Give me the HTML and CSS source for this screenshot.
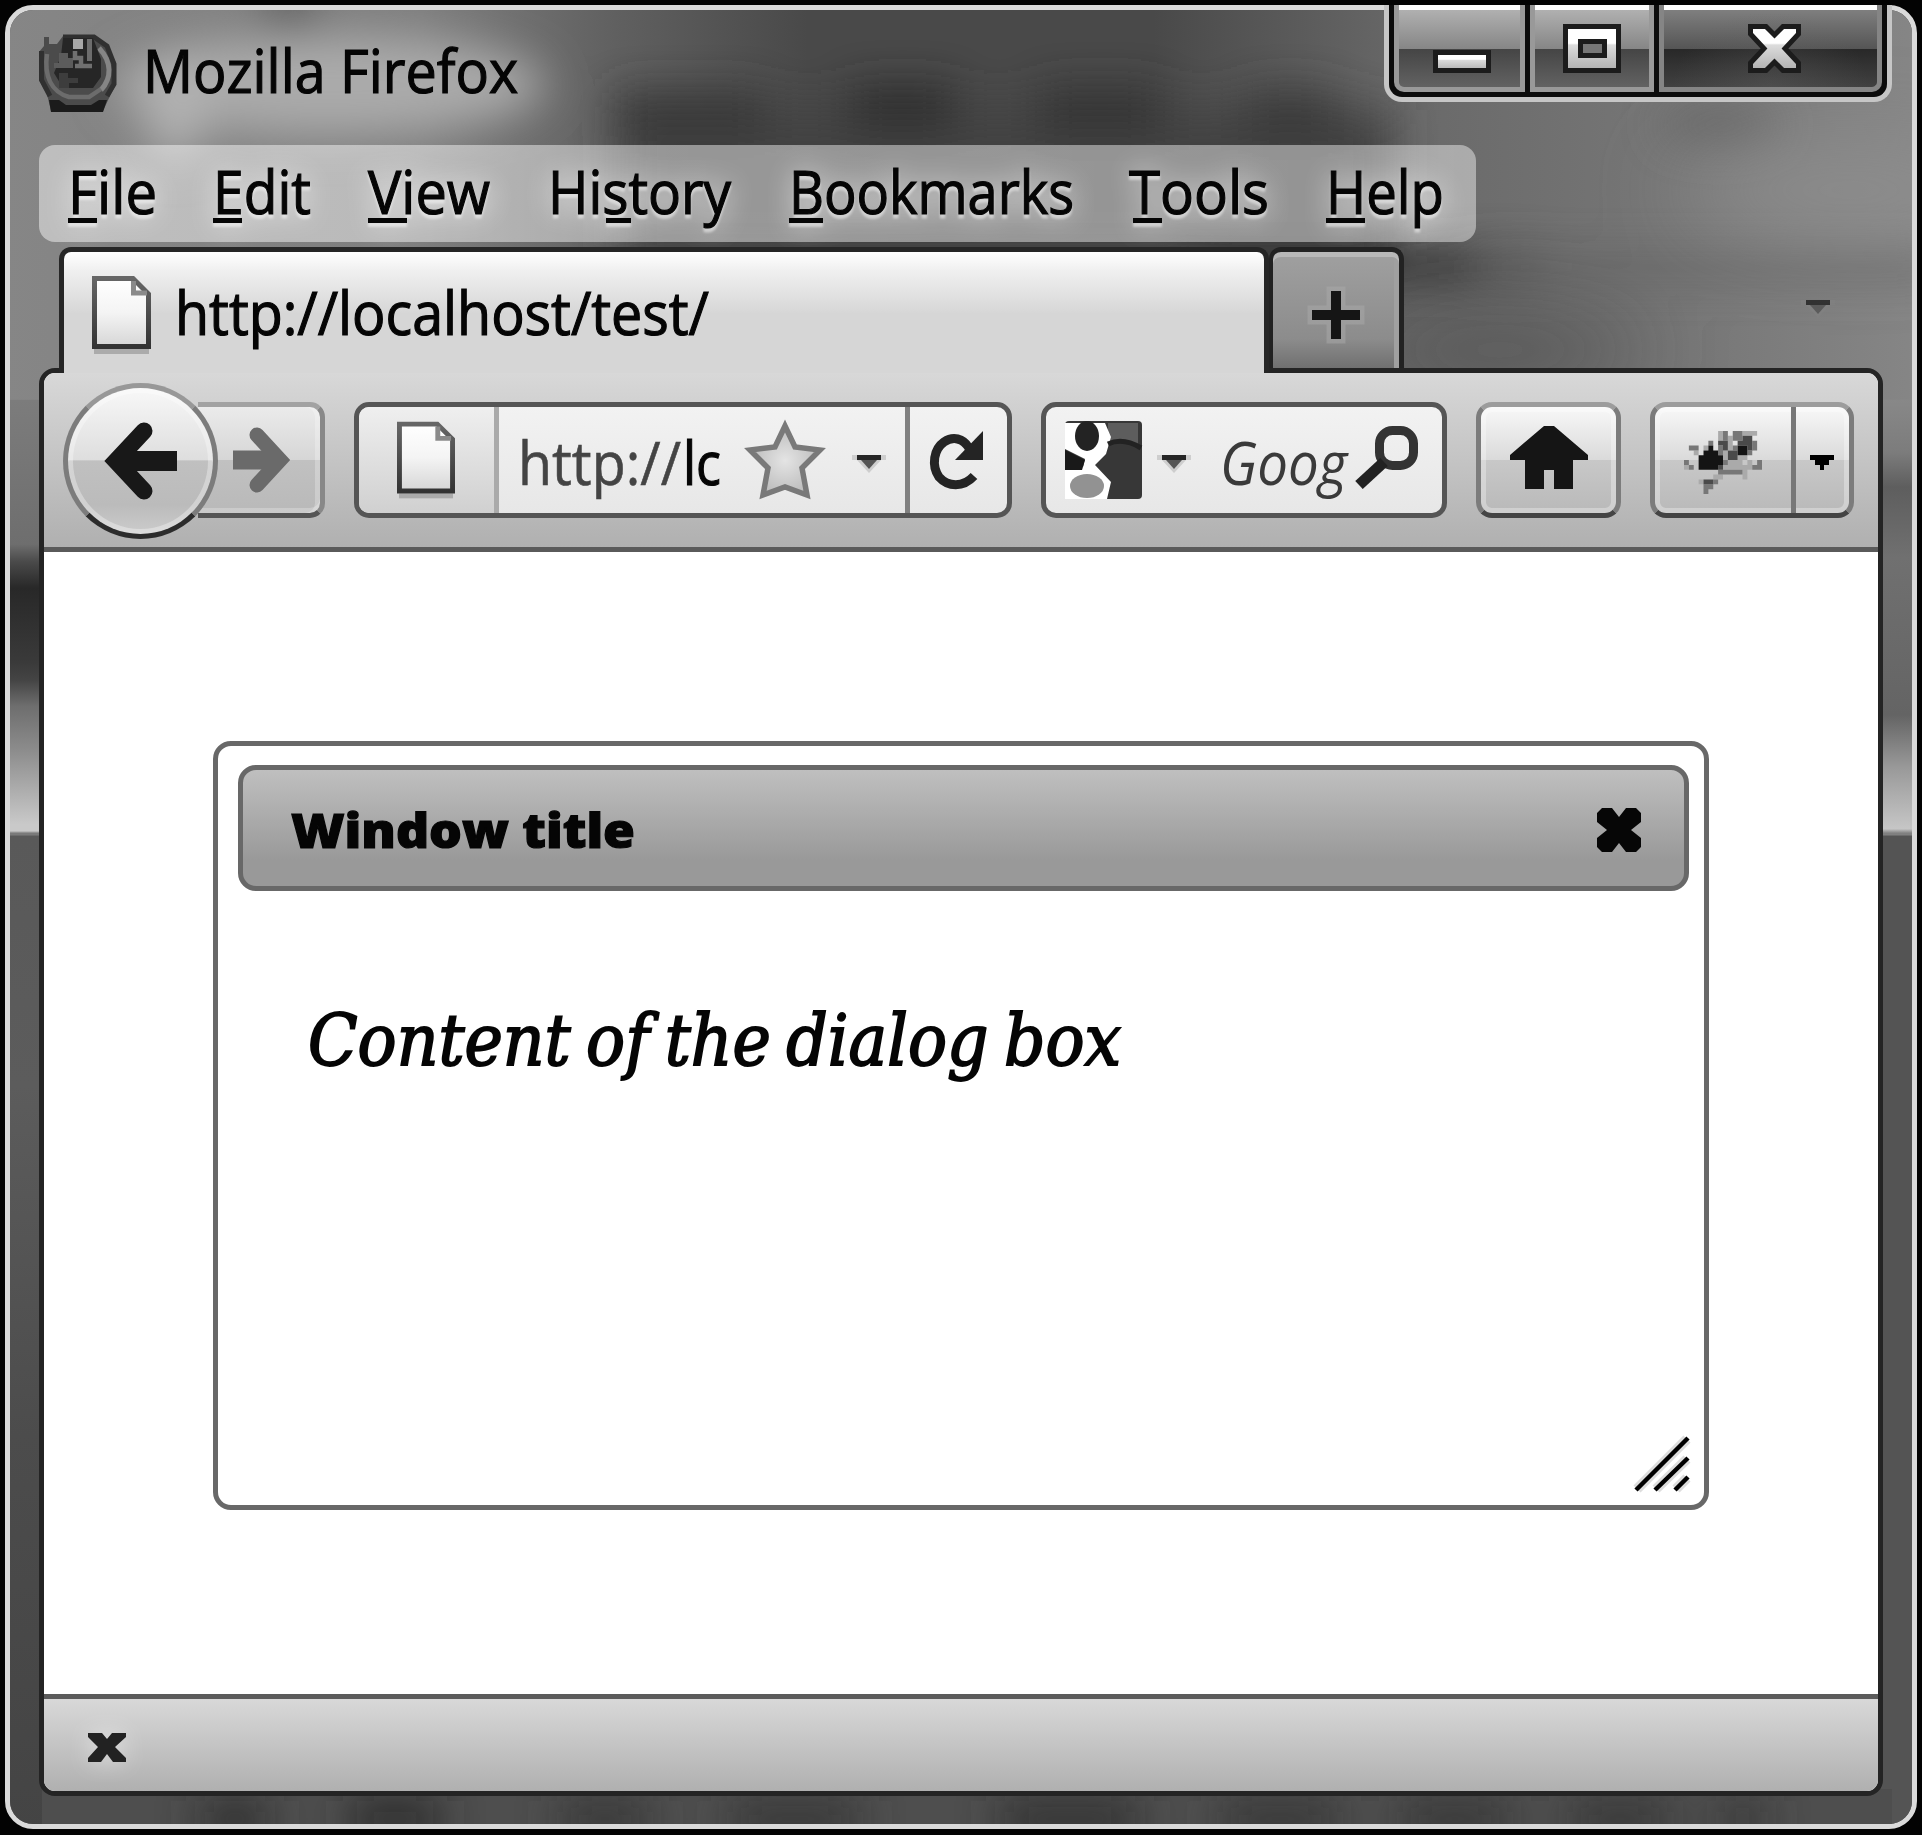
FILE: index.html
```html
<!DOCTYPE html>
<html lang="en">
<head>
<meta charset="utf-8">
<title>Mozilla Firefox</title>
<link rel="stylesheet" href="styles.css">
</head>
<body>
<svg width="0" height="0" class="defs">
  <defs>
    <linearGradient id="pageFill" x1="0" y1="0" x2="0" y2="1"><stop offset="0" stop-color="#fff"/><stop offset=".5" stop-color="#f4f4f4"/><stop offset="1" stop-color="#d6d6d6"/></linearGradient>
    <linearGradient id="pageEdge" x1="0" y1="0" x2="0" y2="1"><stop offset="0" stop-color="#666"/><stop offset="1" stop-color="#333"/></linearGradient>
    <linearGradient id="chromeFill" x1="0" y1="0" x2="0" y2="1"><stop offset=".38" stop-color="#fff"/><stop offset=".42" stop-color="#dcdcdc"/><stop offset="1" stop-color="#b0b0b0"/></linearGradient>
    <radialGradient id="starFill"><stop offset="0" stop-color="#e4e4e4"/><stop offset="1" stop-color="#bdbdbd"/></radialGradient>
    <symbol id="page" viewBox="0 0 59 78">
      <rect x="2" y="73" width="55" height="5" fill="#a0a0a0" opacity=".8"/>
      <path d="M2.500 2.500H41L56.500 18V70.500H2.500Z" fill="url(#pageFill)" stroke="url(#pageEdge)" stroke-width="5"/>
      <path d="M41.500 5V17H55" fill="none" stroke="#8a8a8a" stroke-width="5"/>
    </symbol>
    <symbol id="caret" viewBox="0 0 34 20">
      <path d="M0 2H34V7H29L17 20L5 7H0Z" fill="#888" opacity=".3"/>
      <path d="M5 2H29V7H5Z" fill="#262626"/>
      <path d="M9 7H25L17 16Z" fill="#555"/>
    </symbol>
  </defs>
</svg>
<div class="window">
  <svg class="glass" viewBox="10 10 1902 1815" preserveAspectRatio="none">
    <defs>
      <filter id="soft" x="-50%" y="-80%" width="200%" height="260%"><feGaussianBlur stdDeviation="22"/></filter>
      <filter id="softer" x="-50%" y="-80%" width="200%" height="260%"><feGaussianBlur stdDeviation="45"/></filter>
      <linearGradient id="top" x1="0" y1="0" x2="1" y2="0"><stop offset="0" stop-color="#868686"/><stop offset=".22" stop-color="#7e7e7e"/><stop offset=".32" stop-color="#606060"/><stop offset=".42" stop-color="#494949"/><stop offset=".6" stop-color="#494949"/><stop offset=".74" stop-color="#6a6a6a"/><stop offset=".88" stop-color="#777"/><stop offset="1" stop-color="#868686"/></linearGradient>
      <linearGradient id="railL" x1="0" y1="0" x2="0" y2="1"><stop offset="0" stop-color="#7c7c7c"/><stop offset=".33" stop-color="#6e6e6e"/><stop offset=".37" stop-color="#4a4a4a"/><stop offset=".43" stop-color="#282828"/><stop offset=".6" stop-color="#3a3a3a"/><stop offset=".64" stop-color="#444"/><stop offset=".7" stop-color="#6e6e6e"/><stop offset=".8" stop-color="#8c8c8c"/><stop offset=".97" stop-color="#c9c9c9"/><stop offset=".985" stop-color="#c9c9c9"/><stop offset=".99" stop-color="#7a7a7a"/><stop offset="1" stop-color="#7a7a7a"/></linearGradient>
      <linearGradient id="railR" x1="0" y1="0" x2="0" y2="1"><stop offset="0" stop-color="#888"/><stop offset=".12" stop-color="#7c7c7c"/><stop offset=".2" stop-color="#5e5e5e"/><stop offset=".36" stop-color="#707070"/><stop offset=".72" stop-color="#646464"/><stop offset=".84" stop-color="#999"/><stop offset=".98" stop-color="#c6c6c6"/><stop offset=".99" stop-color="#808080"/><stop offset="1" stop-color="#808080"/></linearGradient>
      <linearGradient id="low" x1="0" y1="0" x2="0" y2="1"><stop offset="0" stop-color="#595959"/><stop offset=".25" stop-color="#5c5c5c"/><stop offset=".6" stop-color="#4c4c4c"/><stop offset="1" stop-color="#444"/></linearGradient>
    </defs>
    <rect x="0" y="0" width="1922" height="440" fill="url(#top)"/>
    <rect x="0" y="400" width="60" height="438" fill="url(#railL)"/>
    <rect x="1870" y="400" width="60" height="438" fill="url(#railR)"/>
    <rect x="0" y="836" width="60" height="1000" fill="url(#low)"/>
    <rect x="1870" y="836" width="60" height="1000" fill="#545454"/>
    <rect x="42" y="1790" width="1850" height="45" fill="#4e4e4e"/>
    <g filter="url(#soft)">
      <rect x="620" y="110" width="770" height="150" fill="#424242"/>
      <ellipse cx="330" cy="85" rx="215" ry="50" fill="#aaa"/>
      <ellipse cx="175" cy="105" rx="30" ry="55" fill="#b2b2b2"/>
      <ellipse cx="290" cy="12" rx="32" ry="16" fill="#484848"/>
      <rect x="615" y="93" width="150" height="40" fill="#343434"/>
      <rect x="850" y="88" width="105" height="40" fill="#2c2c2c"/>
      <rect x="1040" y="90" width="120" height="42" fill="#303030"/>
      <rect x="1245" y="92" width="90" height="44" fill="#383838"/>
      <ellipse cx="1720" cy="125" rx="60" ry="18" fill="#636363"/>
      <rect x="1200" y="251" width="340" height="34" fill="#333"/>
      <rect x="1480" y="256" width="460" height="22" fill="#646464"/>
    </g>
    <g filter="url(#soft)" opacity=".8">
      <rect x="200" y="1800" width="70" height="40" fill="#2c2c2c"/>
      <rect x="350" y="1800" width="90" height="40" fill="#202020"/>
      <rect x="560" y="1800" width="90" height="40" fill="#303030"/>
      <rect x="730" y="1800" width="130" height="40" fill="#303030"/>
      <rect x="1000" y="1800" width="140" height="40" fill="#2a2a2a"/>
      <rect x="1220" y="1800" width="120" height="40" fill="#303030"/>
      <rect x="1400" y="1800" width="110" height="40" fill="#303030"/>
      <rect x="1570" y="1800" width="100" height="40" fill="#303030"/>
      <rect x="1720" y="1800" width="45" height="40" fill="#303030"/>
    </g>
    <g filter="url(#softer)">
      <ellipse cx="1850" cy="190" rx="170" ry="38" fill="#909090"/>
      <ellipse cx="1500" cy="350" rx="150" ry="30" fill="#505050"/>
    </g>
  </svg>

  <header class="titlebar">
    <svg class="app-icon" viewBox="0 0 78 78">
      <path d="M5 3H10V10H18L24 2H56L68 12L77 29V50L70 64L64 77H12L8 60L0 46V18L5 12Z" fill="#4b4b4b"/>
      <path d="M2.500 17V46L11 62M24 3H55L68 12L75 30V50L68 62" fill="none" stroke="#303030" stroke-width="5"/>
      <path d="M60 14C73 28 73 44 62 56" fill="none" stroke="#858585" stroke-width="5"/>
      <path d="M8 20C5 42 12 58 30 63H50L62 55" fill="none" stroke="#6c6c6c" stroke-width="4.500"/>
      <path d="M24 4H54L62 25V43L54 54H24L15 39L22 22Z" fill="#262626"/>
      <path d="M34 5H44V15H34Z" fill="#a8a8a8"/>
      <path d="M48 5H53V27H48Z" fill="#6d6d6d"/>
      <path d="M20 19H29V24H34V34H15V29H20Z" fill="#5c5c5c"/>
      <path d="M36 17V24H42V32H36M43 32H53" fill="none" stroke="#707070" stroke-width="4.500"/>
      <path d="M20 39H29V44H39V49H30V54H20Z" fill="#3d3d3d"/>
      <path d="M10 66H20L27 71H52L60 66H68L64 78H12Z" fill="#1b1b1b"/>
    </svg>
    <svg class="title-text" viewBox="0 0 372 70"><text x="-3" y="56.500" textLength="375" lengthAdjust="spacingAndGlyphs">Mozilla Firefox</text></svg>
    <div class="controls">
      <div class="control minimize"><svg viewBox="0 0 58 49"><rect x="2.500" y="28.500" width="53" height="18" fill="url(#chromeFill)" stroke="#1c1c1c" stroke-width="5"/></svg></div>
      <div class="control maximize"><svg viewBox="0 0 58 49"><rect x="2.500" y="2.500" width="53" height="44" fill="url(#chromeFill)" stroke="#1c1c1c" stroke-width="5"/><rect x="17.500" y="17.500" width="24" height="14" fill="#777" stroke="#1c1c1c" stroke-width="5"/></svg></div>
      <div class="control close"><svg viewBox="0 0 53 49"><path d="M2.500 2.500H18L26.500 11L35 2.500H50.500V10L37 24.500L50.500 39V46.500H35L26.500 38L18 46.500H2.500V39L16 24.500L2.500 10Z" fill="url(#chromeFill)" stroke="#1c1c1c" stroke-width="5"/></svg></div>
    </div>
  </header>

  <nav class="menubar">
    <svg class="menu-item file" viewBox="0 0 82 97"><text x="-5" y="68.500" textLength="89" lengthAdjust="spacingAndGlyphs">File</text><path d="M-5 75.500H24"/></svg>
    <svg class="menu-item edit" viewBox="0 0 93 97"><text x="-4" y="68.500" textLength="98" lengthAdjust="spacingAndGlyphs">Edit</text><path d="M-4 75.500H25"/></svg>
    <svg class="menu-item view" viewBox="0 0 121 97"><text x="0" y="68.500" textLength="122" lengthAdjust="spacingAndGlyphs">View</text><path d="M0 75.500H39"/></svg>
    <svg class="menu-item history" viewBox="0 0 179 97"><text x="-4" y="68.500" textLength="183" lengthAdjust="spacingAndGlyphs">History</text><path d="M54 75.500H79"/></svg>
    <svg class="menu-item bookmarks" viewBox="0 0 278 97"><text x="-5" y="68.500" textLength="285" lengthAdjust="spacingAndGlyphs">Bookmarks</text><path d="M-5 75.500H29"/></svg>
    <svg class="menu-item tools" viewBox="0 0 139 97"><text x="1" y="68.500" textLength="140" lengthAdjust="spacingAndGlyphs">Tools</text><path d="M5 75.500H34"/></svg>
    <svg class="menu-item help" viewBox="0 0 111 97"><text x="-5" y="68.500" textLength="118" lengthAdjust="spacingAndGlyphs">Help</text><path d="M-5 75.500H34"/></svg>
  </nav>

  <div class="tabstrip">
    <div class="tab">
      <svg class="tab-icon"><use href="#page"/></svg>
      <svg class="tab-text" viewBox="0 0 533 90"><text x="-3" y="62" textLength="534" lengthAdjust="spacingAndGlyphs">http://localhost/test/</text></svg>
    </div>
    <div class="new-tab"><svg viewBox="0 0 58 58"><path d="M24 5H34V24H53V34H34V53H24V34H5V24H24Z" stroke="#aaa" stroke-width="9" stroke-opacity=".5" paint-order="stroke" fill="#151515"/></svg></div>
    <svg class="tab-list"><use href="#caret"/></svg>
  </div>

  <div class="frame">
    <div class="toolbar">
      <div class="nav-buttons">
        <div class="back"><svg viewBox="0 0 73 78"><path d="M40 9L12 39L40 69" fill="none" stroke="#181818" stroke-width="17" stroke-linecap="round"/><path d="M14 39H73" stroke="#181818" stroke-width="20"/></svg></div>
        <div class="forward"><svg viewBox="0 0 58 68"><path d="M24 9L47 34L24 59" fill="none" stroke="#6a6a6a" stroke-width="15" stroke-linecap="round"/><path d="M0 34H44" stroke="#6a6a6a" stroke-width="19"/></svg></div>
      </div>
      <div class="field urlbar">
        <div class="identity"><svg><use href="#page"/></svg></div>
        <svg class="url-text" viewBox="0 0 200 90"><text class="dim" x="-3" y="62" textLength="163" lengthAdjust="spacingAndGlyphs">http://</text><text x="162" y="62" textLength="38" lengthAdjust="spacingAndGlyphs">lc</text></svg>
        <svg class="star" viewBox="0 0 78 78"><path d="M39 5L49 26L74 29L56 47L61 74L39 66L17 74L22 47L4 29L29 26Z" fill="url(#starFill)" stroke="#797979" stroke-width="5.500"/></svg>
        <svg class="caret"><use href="#caret"/></svg>
        <div class="reload"><svg viewBox="0 0 53 58"><path d="M44 45C33 57 18 56 9 46C1 34 4 18 14 11C23 5 33 7 39 17" fill="none" stroke="#242424" stroke-width="9"/><path d="M53 0V29H25Z" fill="#242424"/></svg></div>
      </div>
      <div class="field search">
        <svg class="engine" viewBox="0 0 77 78">
          <rect width="77" height="78" rx="4" fill="#373737"/><path d="M43 2H73V26Q58 17 43 24Z" fill="#5d5d5d"/><path d="M0 2H40L46 16L41 33L30 44L46 61L42 78H0V49L18 46L20 38L0 28Z" fill="#fff"/><path d="M0 29L20 39L17 49H0Z" fill="#191919"/><ellipse cx="22" cy="15" rx="12" ry="15" fill="#232323"/><ellipse cx="22" cy="65" rx="17" ry="12" fill="#929292"/><path d="M43 23Q58 16 76 27" stroke="#222" stroke-width="5" fill="none"/>
        </svg>
        <svg class="caret"><use href="#caret"/></svg>
        <svg class="search-text" viewBox="0 0 126 90"><text x="-2" y="62" textLength="127" lengthAdjust="spacingAndGlyphs">Goog</text></svg>
        <svg class="magnifier" viewBox="0 0 63 63"><rect x="24.500" y="4.500" width="34" height="35" rx="13" fill="none" stroke="#333" stroke-width="9"/><path d="M29 36L4 59" stroke="#222" stroke-width="11"/></svg>
      </div>
      <div class="button home"><svg viewBox="0 0 78 63"><path d="M34 0H44L78 29V34H63V63H44V44H34V63H15V34H0V29Z" fill="#151515"/></svg></div>
      <div class="button addon">
        <div class="addon-main"><svg viewBox="0 0 16 13" preserveAspectRatio="none">
          <g fill="#aaa"><path d="M7 0H8V2H7ZM12 0H15V1H12ZM9 1H10V4H9ZM2 4H3V5H2ZM4 3H5V4H4ZM8 4H9V6H8ZM11 5H13V6H11ZM9 6H12V7H9ZM8 7H11V8H8ZM13 6H14V7H13ZM0 7H1V8H0ZM6 9H8V10H6ZM3 10H4V11H3ZM11 7H14V8H11ZM12 8H13V10H12Z"/></g>
          <g fill="#777"><path d="M8 0H9V2H8ZM10 0H12V2H10ZM1 3H3V4H1ZM5 2H6V3H5ZM14 2H15V4H14ZM0 6H1V7H0ZM1 7H2V8H1ZM15 6H16V8H15ZM14 7H15V8H14ZM7 3H8V5H7ZM10 3H11V4H10ZM8 6H9V7H8ZM7 8H12V9H7ZM6 10H7V11H6ZM4 11H6V12H4ZM4 12H5V13H4ZM13 4H14V5H13Z"/></g>
          <g fill="#4a4a4a"><path d="M7 2H9V3H7ZM12 1H14V2H12ZM11 2H14V3H11ZM8 3H9V4H8ZM9 4H11V6H9ZM13 3H14V4H13ZM4 10H6V11H4ZM7 7H8V8H7Z"/></g>
          <g fill="#141414"><path d="M5 3H6V4H7V5H8V7H7V8H3V5H4V4H5ZM11 3H13V5H11Z"/></g>
        </svg></div>
        <div class="addon-menu"><svg viewBox="0 0 24 15"><path d="M0 0H24V5H19V10H14V15H10V10H5V5H0Z"/></svg></div>
      </div>
    </div>

    <main class="page">
      <section class="dialog">
        <div class="dialog-title">
          <svg class="dialog-name" viewBox="0 0 344 60"><text x="0" y="44.500" textLength="344" lengthAdjust="spacingAndGlyphs">Window title</text></svg>
          <svg class="dialog-close" viewBox="0 0 44 44"><path d="M5 0H15L22 9L29 0H39L44 5V14L34 22L44 30V39L39 44H29L22 35L15 44H5L0 39V30L10 22L0 14V5Z" fill="#060606"/></svg>
        </div>
        <div class="dialog-body">
          <svg class="dialog-text" viewBox="0 0 810 100"><text x="-2" y="71" textLength="813" lengthAdjust="spacingAndGlyphs">Content of the dialog box</text></svg>
        </div>
        <svg class="grip" viewBox="0 0 54 54"><g stroke="#ddd" stroke-width="10"><path d="M2 52L52 2M21 52L52 22M41 52L52 41"/></g><g stroke="#000" stroke-width="4.500"><path d="M1 53L53 1M20 53L53 21M40 53L53 40"/></g></svg>
      </section>
    </main>

    <footer class="status"><svg viewBox="0 0 38 29"><path d="M0 0H14L19 6L24 0H38V4L27 14L38 25V29H25L19 21L13 29H0V25L10 14L0 4Z" fill="#222"/></svg></footer>
  </div>
</div>
</body>
</html>
```
FILE: styles.css
```css
* { box-sizing: border-box; }

body {
  margin: 0;
  width: 1922px;
  height: 1835px;
  padding: 5px 5px 6px;
  background: #030303;
  overflow: hidden;
  font-family: "Noto Sans", "Open Sans", sans-serif;
}

svg { display: block; overflow: visible; flex: none; }
text { font-family: "Open Sans", "Noto Sans", sans-serif; font-size: 60px; fill: #050505; stroke: #050505; stroke-width: 1.2px; }
.defs { position: absolute; }

.window {
  position: relative;
  width: 1912px;
  height: 1824px;
  border: 5px solid #dadada;
  border-radius: 28px;
  background: #505050;
  display: flex;
  flex-direction: column;
}

/* Blurred desktop seen through the window frame */
.glass {
  position: absolute;
  inset: 0;
  width: 1902px;
  height: 1814px;
  overflow: hidden;
  border-radius: 23px;
}

.titlebar, .menubar, .tabstrip, .frame { position: relative; flex: none; }

.titlebar { height: 135px; padding-left: 29px; display: flex; align-items: flex-start; }
.app-icon { width: 78px; height: 78px; margin-top: 24px; }
.title-text { width: 372px; height: 70px; margin: 26px 0 0 29px; }

.controls {
  display: flex;
  width: 508px;
  height: 97px;
  margin: -5px 20px 0 auto;
  border: 5px solid #c6c6c6;
  border-top: 0;
  border-radius: 0 0 18px 18px;
  background: #0c0c0c;
  padding: 0 5px 5px;
  gap: 5px;
}
.control {
  display: flex;
  justify-content: center;
  padding-top: 19px;
  border: 5px solid #999;
  border-top: 0;
  background: linear-gradient(#fff 0 5px, #b0b0b0 5px, #868686 44px, #454545 44px, #666 87px);
}
.control svg { height: 49px; }
.minimize { width: 131px; padding-left: 5px; border-radius: 0 0 0 10px; }
.maximize { width: 125px; }
.close {
  width: 223px;
  padding-left: 8px;
  border-color: #858585;
  border-radius: 0 0 10px 0;
  background: linear-gradient(#fff 0 5px, transparent 5px), radial-gradient(ellipse at 50% 100%, #6665, transparent 65%), linear-gradient(#848484, #555 44px, #282828 44px, #444 87px);
}
.minimize svg, .maximize svg { width: 58px; }
.close svg { width: 53px; }

.menubar {
  display: flex;
  width: 1437px;
  height: 97px;
  margin-left: 29px;
  padding-left: 34px;
  border-radius: 16px;
  background: linear-gradient(90deg, #ffffff78, #ffffff6e);
}
.menu-item { height: 97px; filter: drop-shadow(0 0 14px #ffffff90) drop-shadow(0 4px 1px #ffffff80); }
.menu-item path { stroke: #050505; stroke-width: 5px; }
.file { width: 82px; }
.edit { width: 93px; margin-left: 62px; }
.view { width: 121px; margin-left: 58px; }
.history { width: 179px; margin-left: 63px; }
.bookmarks { width: 278px; margin-left: 63px; }
.tools { width: 139px; margin-left: 56px; }
.help { width: 111px; margin-left: 64px; }

.tabstrip { display: flex; height: 126px; padding: 5px 0 0 49px; z-index: 1; }
.tab {
  display: flex;
  width: 1210px;
  height: 126px;
  padding: 24px 0 0 28px;
  border: 5px solid #262626;
  border-bottom: 0;
  border-radius: 12px 12px 0 0;
  background: linear-gradient(#fff, #f0f0f0 18px, #d6d6d6 62px);
}
.tab-icon { width: 59px; height: 78px; }
.tab-text { width: 533px; height: 90px; margin: -3px 0 0 27px; }
.new-tab {
  width: 135px;
  height: 121px;
  padding: 34px 0 0 34px;
  border: 5px solid #222;
  border-width: 5px 5px 0 4px;
  border-radius: 12px 12px 0 0;
  background: linear-gradient(#a0a0a0, #8c8c8c 75%, #707070);
  box-shadow: inset 0 5px #b8b8b8, inset -5px 0 #a0a0a0;
}
.new-tab svg { width: 58px; height: 58px; }
.tab-list { width: 34px; height: 20px; margin: 51px 0 0 397px; opacity: .85; }

.frame {
  width: 1844px;
  height: 1428px;
  margin-left: 29px;
  border: 5px solid #242424;
  border-radius: 16px;
  background: #fff;
  overflow: hidden;
}
.toolbar {
  display: flex;
  height: 179px;
  padding: 10px 24px 0 19px;
  border-bottom: 5px solid #5a5a5a;
  background: linear-gradient(#d8d8d8, #b0b0b0);
}
.nav-buttons { display: flex; width: 262px; margin-right: 29px; }
.back {
  z-index: 1;
  display: grid;
  place-items: center;
  width: 155px;
  height: 156px;
  border: 5px solid;
  border-color: #989898 #7c7c7c #2c2c2c;
  border-radius: 50%;
  background: linear-gradient(#f8f8f8, #dedede 49%, #c0c0c0 50%, #bbb 80%, #ccc);
  box-shadow: inset 0 0 0 5px #ffffff55;
}
.back svg { width: 73px; height: 78px; }
.forward {
  display: flex;
  align-items: center;
  width: 127px;
  height: 116px;
  margin: 19px 0 0 -20px;
  padding-left: 35px;
  border: 5px solid;
  border-color: #a2a2a2 #888 #555;
  border-left: 0;
  border-radius: 0 15px 15px 0;
  background: linear-gradient(#ebebeb, #d6d6d6 50%, #c1c1c1 50%, #b9b9b9);
  box-shadow: inset -5px 0 #ffffff40, inset 0 -5px #ffffff40;
}
.forward svg { width: 58px; height: 68px; }

.field {
  display: flex;
  height: 116px;
  margin-top: 19px;
  border: 5px solid #555;
  border-radius: 15px;
  background: linear-gradient(#f2f2f2, #e7e7e7);
  overflow: hidden;
}
.urlbar { width: 658px; }
.identity {
  width: 140px;
  padding: 14px 0 0 38px;
  border-right: 5px solid #aaa;
  background: linear-gradient(#efefef, #d0d0d0);
}
.identity svg { width: 58px; height: 78px; }
.url-text { width: 200px; height: 90px; margin: 16px 0 0 22px; }
.url-text .dim { fill: #444; stroke: #444; stroke-width: .6px; }
.star { width: 78px; height: 78px; margin: 14px 0 0 25px; }
.caret { width: 34px; height: 20px; }
.urlbar .caret { margin: 46px 0 0 28px; }
.reload { margin-left: 19px; border-left: 5px solid #808080; padding: 24px 0 0 20px; }
.reload svg { width: 53px; height: 58px; }
.search { width: 406px; margin-left: 29px; }
.engine { width: 77px; height: 78px; margin: 14px 0 0 19px; }
.search .caret { margin: 46px 0 0 15px; }
.search-text { width: 126px; height: 90px; margin: 16px 0 0 31px; }
.search-text text { font-style: italic; fill: #3a3a3a; stroke: none; }
.magnifier { width: 63px; height: 63px; margin: 19px 0 0 7px; }

.button {
  display: flex;
  height: 116px;
  margin: 19px 0 0 29px;
  border: 5px solid;
  border-color: #9c9c9c #7c7c7c #444;
  border-radius: 16px;
  background: linear-gradient(#f8f8f8, #dadada 50%, #c8c8c8 50%, #b9b9b9);
  box-shadow: inset 0 0 0 5px #ffffff50;
}
.home { width: 145px; padding: 19px 0 0 29px; }
.home svg { width: 78px; height: 63px; }
.addon { width: 204px; }
.addon-main { width: 141px; padding: 24px 0 0 29px; border-right: 5px solid #777; }
.addon-main svg { width: 78px; height: 63px; }
.addon-menu { padding: 48px 0 0 14px; }
.addon-menu svg { width: 24px; height: 15px; }

.page { height: 1142px; padding: 189px 0 0 169px; background: #fff; }
.dialog {
  position: relative;
  width: 1496px;
  height: 769px;
  padding: 19px 15px 0 20px;
  border: 5px solid #686868;
  border-radius: 18px;
}
.dialog-title {
  display: flex;
  justify-content: space-between;
  height: 126px;
  padding: 33px 43px 0 48px;
  border: 5px solid #686868;
  border-radius: 18px;
  background: linear-gradient(#bfbfbf, #999 78%);
}
.dialog-name { width: 344px; height: 60px; }
.dialog-name text { font-size: 48px; font-weight: 800; }
.dialog-close { width: 44px; height: 44px; margin-top: 5px; }
.dialog-body { padding: 103px 0 0 72px; }
.dialog-text { width: 810px; height: 100px; }
.dialog-text text { font: italic 71px "DejaVu Serif Condensed", "DejaVu Serif", serif; stroke-width: 1.8px; word-spacing: -5px; }
.grip { position: absolute; right: 15px; bottom: 14px; width: 54px; height: 54px; }

.status {
  height: 97px;
  padding: 34px 0 0 44px;
  border-top: 5px solid #5b5b5b;
  background: linear-gradient(#d8d8d8, #b0b0b0);
}
.status svg { width: 38px; height: 29px; filter: drop-shadow(0 0 12px #fff8); }
```
